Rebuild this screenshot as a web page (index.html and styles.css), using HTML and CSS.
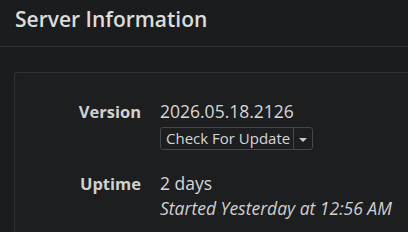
FILE: index.html
```html
<!DOCTYPE html>
<html lang="en">
<head>
<meta charset="UTF-8">
<meta name="viewport" content="width=device-width, initial-scale=1.0">
<title>Server Information</title>
<link rel="stylesheet" href="styles.css">
</head>
<body>

<div class="page-header">
  <h1>Server Information</h1>
</div>

<div class="panel">
  <div class="info-row">
    <div class="info-label">Version</div>
    <div class="info-value">
      2026.05.18.2126
      <div class="btn-group">
        <button class="btn">Check For Update</button>
        <button class="btn caret-btn"><span class="caret"></span></button>
      </div>
    </div>
  </div>

  <div class="info-row">
    <div class="info-label">Uptime</div>
    <div class="info-value">
      2 days
      <div class="muted">Started Yesterday at 12:56 AM</div>
    </div>
  </div>
</div>

</body>
</html>
```

FILE: styles.css
```css
body {
  margin: 0;
  background: #1b1c1e;
  color: #d6d6d6;
  font-family: "Open Sans", sans-serif;
  overflow: hidden;
  height: 232px;
}
.page-header {
  padding: 2px 15px 0;
  height: 44px;
  border-bottom: 1px solid #2e3032;
}
.page-header h1 {
  margin: 0;
  font-size: 21px;
  line-height: 34px;
  font-weight: 600;
  color: #dcdcdc;
}
.panel {
  margin: 25px 0 0 14px;
  border: 1px solid #303234;
  border-right: none;
  border-bottom: none;
  border-radius: 4px 0 0 0;
  background: #1c1e20;
  padding-top: 26px;
  height: 134px;
}
.info-row {
  display: grid;
  grid-template-columns: 126px 1fr;
  column-gap: 19px;
  font-size: 17.5px;
  line-height: 25px;
  margin-bottom: 21px;
}
.info-row:last-child {
  margin-bottom: 0;
}
.info-label {
  text-align: right;
  font-weight: 700;
  font-size: 16.5px;
  color: #d0d0d0;
}
.info-value {
  color: #d6d6d6;
}
.btn-group {
  display: flex;
  width: max-content;
  margin-top: 3px;
}
.btn {
  font-family: inherit;
  font-size: 15px;
  line-height: 21px;
  color: #d6d6d6;
  background: #1c1e20;
  border: 1px solid #45484b;
  padding: 0 3px 0 5px;
  border-radius: 3px 0 0 3px;
}
.caret-btn {
  border-radius: 0 3px 3px 0;
  padding: 0 5px;
  margin-left: -1px;
}
.caret {
  display: inline-block;
  border-left: 4px solid transparent;
  border-right: 4px solid transparent;
  border-top: 4px solid #c8c8c8;
  vertical-align: middle;
}
.muted {
  font-style: italic;
  color: #d0d0d0;
}
```
